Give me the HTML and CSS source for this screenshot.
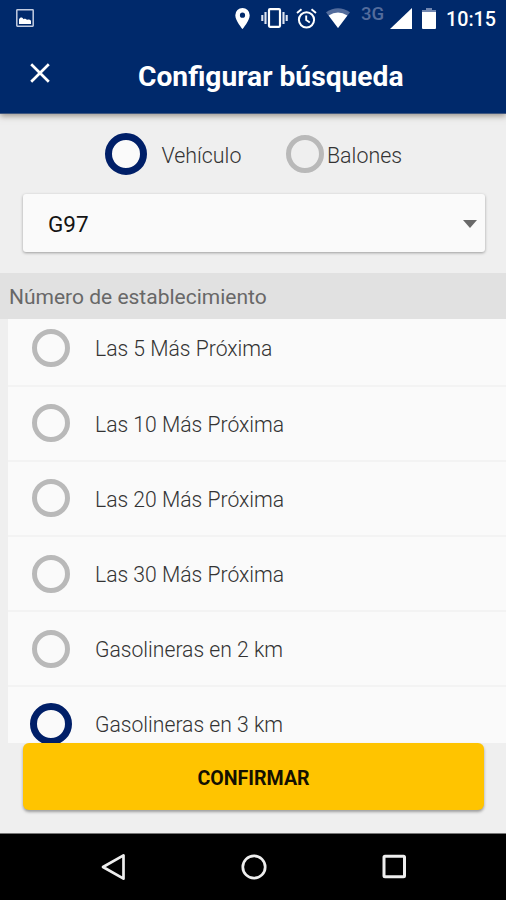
FILE: index.html
```html
<!DOCTYPE html>
<html lang="es">
<head>
<meta charset="utf-8">
<title>Configurar búsqueda</title>
<link rel="stylesheet" href="styles.css">
</head>
<body>
<div class="screen">
  <header class="header">
    <div class="status">
      <svg class="ic-photo" width="18" height="18" viewBox="0 0 18 18"><rect x=".8" y=".8" width="16.4" height="16.4" rx=".6" fill="none" stroke="#c3cce0" stroke-width="1.5"/><path d="M3 15v-4.500c1-2.500 3.500-2.500 4.500-.3 1.500-.7 2.700-.4 3.500.8 1.500-.9 3-.4 4 .8V15z" fill="#fff"/></svg>
      <svg class="ic-pin" width="15" height="21" viewBox="0 0 15 21"><path fill="#fff" fill-rule="evenodd" d="M7.500 0A7.200 7.200 0 0 0 .3 7.200C.3 12.600 7.500 21 7.500 21s7.200-8.400 7.200-13.800A7.200 7.200 0 0 0 7.500 0zm0 4.600a2.600 2.600 0 1 1 0 5.200 2.600 2.600 0 0 1 0-5.200z"/></svg>
      <svg class="ic-vib" width="27" height="20" viewBox="0 0 27 20"><rect x="8" y="1.200" width="11" height="17.600" rx="1" fill="none" stroke="#fff" stroke-width="2.200"/><path d="M4.500 4v12M22.500 4v12M1.300 7v6M25.700 7v6" stroke="#dfe5f1" stroke-width="2.100"/></svg>
      <svg class="ic-alarm" width="21" height="21" viewBox="0 0 21 21"><circle cx="10.500" cy="11.800" r="7.600" fill="none" stroke="#fff" stroke-width="2"/><path d="M10.200 7.500v4.600l3.600 2.400M1 5l4.500-3.800M20 5l-4.500-3.800" fill="none" stroke="#fff" stroke-width="1.900"/></svg>
      <svg class="ic-wifi" width="24" height="20" viewBox="0 0 24 20"><path d="M0 4.300Q12-3.700 24 4.300L12 20z" fill="#536c9c"/><path d="M2.600 7.500Q12 1.500 21.400 7.500L12 20z" fill="#fff"/></svg>
      <span class="net">3G</span>
      <svg class="ic-signal" width="22" height="21" viewBox="0 0 22 21"><path d="M0 21L22 0v21z" fill="#fff"/></svg>
      <svg class="ic-bat" width="14" height="21" viewBox="0 0 14 21"><path d="M4 0h6v2h4v3H0V2h4z" fill="#7287b0"/><path d="M0 4h14v16q0 1-1 1H1q-1 0-1-1z" fill="#fff"/></svg>
      <span class="time">10:15</span>
    </div>
    <div class="toolbar">
      <svg class="close" width="20" height="20" viewBox="0 0 20 20"><path d="M1.200 1.200l17.600 17.600M18.800 1.200L1.200 18.800" stroke="#fff" stroke-width="2.700"/></svg>
      <h1 class="title">Configurar búsqueda</h1>
    </div>
  </header>

  <div class="types">
    <span class="radio on"></span><span class="type-label first">Vehículo</span>
    <span class="radio"></span><span class="type-label second">Balones</span>
  </div>

  <div class="select"><span>G97</span><svg width="14" height="8" viewBox="0 0 14 8"><path d="M0 0h14L7 8z" fill="#696969"/></svg></div>

  <h2 class="section">Número de establecimiento</h2>

  <div class="viewport">
    <ul class="list">
      <li class="row"><span class="radio"></span><span class="label">Las 5 Más Próxima</span></li>
      <li class="row"><span class="radio"></span><span class="label">Las 10 Más Próxima</span></li>
      <li class="row"><span class="radio"></span><span class="label">Las 20 Más Próxima</span></li>
      <li class="row"><span class="radio"></span><span class="label">Las 30 Más Próxima</span></li>
      <li class="row"><span class="radio"></span><span class="label">Gasolineras en 2 km</span></li>
      <li class="row"><span class="radio on"></span><span class="label">Gasolineras en 3 km</span></li>
    </ul>
  </div>

  <button class="confirm">CONFIRMAR</button>

  <nav class="nav">
    <svg width="26" height="28" viewBox="0 0 26 28"><path d="M2 14L22.500 2.300v23.400z" fill="none" stroke="#eee" stroke-width="2.700" stroke-linejoin="round"/></svg>
    <svg width="26" height="28" viewBox="0 0 26 28"><circle cx="13" cy="14" r="11.200" fill="none" stroke="#eee" stroke-width="2.700"/></svg>
    <svg width="26" height="28" viewBox="0 0 26 28"><rect x="3" y="3.200" width="20.500" height="20.500" rx="1" fill="none" stroke="#eee" stroke-width="3"/></svg>
  </nav>
</div>
</body>
</html>
```

FILE: styles.css
```css
* { box-sizing: border-box; }
body { margin: 0; font-family: Roboto, "Liberation Sans", sans-serif; }
svg { display: block; flex: none; }
.screen { width: 506px; height: 900px; background: #efefef; display: flex; flex-direction: column; overflow: hidden; }

.header { height: 114px; flex: none; background: #00296b; border-bottom: 1px solid #40577f; box-shadow: 0 2px 6px rgba(70, 55, 40, .5); }
.status { height: 36px; display: flex; align-items: flex-start; padding: 8px 0 0 16px; color: #fff; white-space: nowrap; }
.ic-photo { margin-top: 1px; }
.ic-pin { margin-left: 201px; }
.ic-vib { margin-left: 11px; }
.ic-alarm { margin-left: 8px; }
.ic-wifi { margin-left: 9px; }
.net { width: 24px; margin: -4px 0 0 11px; font-size: 18.500px; line-height: 20px; font-weight: 500; color: #536c9c; }
.ic-signal { margin-left: 5px; }
.ic-bat { margin-left: 10px; }
.time { margin-left: 10px; font-size: 19.700px; line-height: 23px; font-weight: 500; }
.toolbar { height: 77px; display: flex; align-items: center; padding: 0 0 0 30px; }
.close { margin-top: -3px; }
.title { margin: 4px 0 0 88px; font-size: 28.200px; line-height: 34px; font-weight: 700; color: #fff; white-space: nowrap; }

.radio { width: 38px; height: 38px; flex: none; border: 5px solid #b9b9b9; border-radius: 50%; }
.radio.on { width: 42px; height: 42px; border: 7px solid #001f68; background: #fafafa; }

.types { height: 80px; flex: none; display: flex; align-items: center; padding-left: 105px; font-size: 21.400px; font-weight: 300; color: #333; }
.type-label { margin-top: 2px; white-space: nowrap; }
.first { width: 124.500px; margin-left: 14.500px; }
.second { margin-left: 3px; }

.select { height: 58px; flex: none; margin: 0 21px 0 23px; padding: 1px 8px 0 25px; display: flex; align-items: center; justify-content: space-between; background: #fafafa; border-radius: 3px; box-shadow: 0 1px 3px rgba(0, 0, 0, .35); font-size: 22.500px; color: #141414; }
.section { height: 46px; flex: none; margin: 21px 0 0; padding: 2px 0 0 9px; display: flex; align-items: center; background: #e1e1e1; font-size: 21px; font-weight: 400; color: #686868; }

.viewport { height: 424px; flex: none; margin-left: 8px; overflow: hidden; background: #fafafa; }
.list { list-style: none; margin: -7.500px 0 0; padding: 0; }
.row { height: 75.200px; display: flex; align-items: center; padding-left: 24px; border-bottom: 2px solid #f3f3f3; }
.row .on { margin: 0 -2px; }
.label { margin: 1.500px 0 0 25px; font-size: 21.150px; font-weight: 300; color: #333; white-space: nowrap; }

.confirm { height: 67px; flex: none; margin: 0 22px 0 23px; padding: 3px 0 0; border: 0; border-radius: 6px; background: #ffc400; box-shadow: 0 2px 3px rgba(0, 0, 0, .35); font: 700 19.600px Roboto, "Liberation Sans", sans-serif; color: #141000; }
.nav { height: 67px; margin-top: auto; display: flex; justify-content: space-between; align-items: center; padding: 0 99px 0 101px; background: #000; border-top: 1px solid #777; }
```
